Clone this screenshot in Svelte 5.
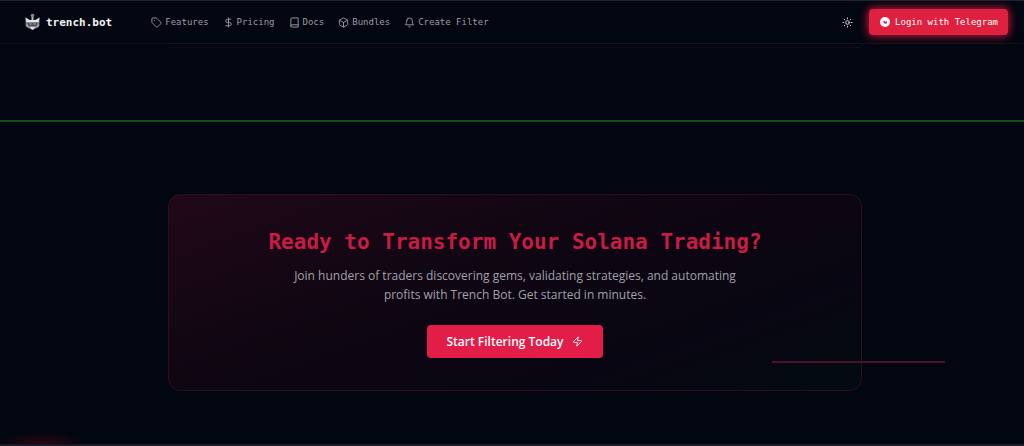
<script>
  const links = [
    { label: 'Features', icon: 'tag', href: '#features' },
    { label: 'Pricing', icon: 'dollar', href: '#pricing' },
    { label: 'Docs', icon: 'book', href: '#docs' },
    { label: 'Bundles', icon: 'box', href: '#bundles' },
    { label: 'Create Filter', icon: 'bell', href: '#create' }
  ];

  const icons = {
    tag: [
      'M12.6 2.6A2 2 0 0 0 11.2 2H4a2 2 0 0 0-2 2v7.2a2 2 0 0 0 .6 1.4l8.7 8.7a2.4 2.4 0 0 0 3.4 0l6.6-6.6a2.4 2.4 0 0 0 0-3.4z',
      'M7.5 7.5h.01'
    ],
    dollar: ['M12 2v20', 'M17 5H9.5a3.5 3.5 0 0 0 0 7h5a3.5 3.5 0 0 1 0 7H6'],
    book: ['M4 19.5v-15A2.5 2.5 0 0 1 6.5 2H20v20H6.5a2.5 2.5 0 0 1 0-5H20'],
    box: [
      'M21 8a2 2 0 0 0-1-1.7l-7-4a2 2 0 0 0-2 0l-7 4A2 2 0 0 0 3 8v8a2 2 0 0 0 1 1.7l7 4a2 2 0 0 0 2 0l7-4a2 2 0 0 0 1-1.7z',
      'M3.3 7L12 12l8.7-5',
      'M12 22V12'
    ],
    bell: ['M6 8a6 6 0 0 1 12 0c0 7 3 9 3 9H3s3-2 3-9', 'M10.3 21a1.94 1.94 0 0 0 3.4 0'],
    sun: [
      'M16 12a4 4 0 1 1-8 0 4 4 0 0 1 8 0z',
      'M12 2v2M12 20v2M4.9 4.9l1.4 1.4M17.7 17.7l1.4 1.4M2 12h2M20 12h2M6.3 17.7l-1.4 1.4M19.1 4.9l-1.4 1.4'
    ],
    zap: [
      'M4 14a1 1 0 0 1-.8-1.6l9.9-10.2a.5.5 0 0 1 .9.5L12 8.7A1 1 0 0 0 13 10h7a1 1 0 0 1 .8 1.6l-9.9 10.2a.5.5 0 0 1-.9-.5l2-6A1 1 0 0 0 11 14z'
    ]
  };
</script>

{#snippet icon(name)}
  <svg class="icon" viewBox="0 0 24 24" aria-hidden="true">
    {#each icons[name] as d}
      <path {d} />
    {/each}
  </svg>
{/snippet}

<div class="page">
  <header>
    <a class="brand" href="#top">
      <svg viewBox="0 0 16 18" aria-hidden="true">
        <circle cx="8" cy="2.5" r="1.8" fill="#85868f" />
        <path d="M8 4v3" stroke="#b8b8be" stroke-width="2" />
        <path d="M1 4l4 3h6l4-3v6l-1 4-4 2-2 1-2-1-4-2-1-4z" fill="#85868f" />
        <path d="M1 5l4 2h6l4-2-1 4H2z" fill="#e6e6ea" />
        <path d="M3 10h10l-1 3H4z" fill="#4a4b55" />
        <path d="M5 11h2M9 11h2M1 12l3 2M15 12l-3 2" stroke="#c4c4ca" />
        <path d="M5 14h6l-3 3z" fill="#dedee2" />
      </svg>
      <span>trench.bot</span>
    </a>
    <nav>
      {#each links as link}
        <a href={link.href}>{@render icon(link.icon)}{link.label}</a>
      {/each}
    </nav>
    <button class="theme" type="button" aria-label="Toggle theme">{@render icon('sun')}</button>
    <button class="login" type="button">
      <svg viewBox="0 0 12 12" aria-hidden="true">
        <circle cx="6" cy="6" r="5" fill="#fff" />
        <path d="M5 4a2 2 0 1 0 3 3V5L6 6z" fill="#e11d48" />
      </svg>
      Login with Telegram
    </button>
  </header>

  <main>
    <div class="previous"></div>
    <div class="scanline"></div>
    <section class="cta">
      <h2>Ready to Transform Your Solana Trading?</h2>
      <p>
        Join hunders of traders discovering gems, validating strategies, and automating profits with
        Trench Bot. Get started in minutes.
      </p>
      <button class="start" type="button">
        Start Filtering Today
        {@render icon('zap')}
      </button>
      <span class="streak"></span>
    </section>
  </main>

  <footer></footer>
</div>

<style>
  :global(body) {
    margin: 0;
    background: #020610;
  }
  .page {
    overflow: hidden;
    font-family: 'Open Sans', 'Noto Sans', sans-serif;
    color: #f4f4f5;
    background: #020610;
  }
  header {
    display: flex;
    align-items: center;
    box-sizing: border-box;
    height: 44px;
    padding: 0 16px 0 24px;
    border-top: 1px solid #22232d;
    border-bottom: 1px solid #12131d;
    font-family: 'DejaVu Sans Mono', 'Liberation Mono', monospace;
  }
  a {
    color: inherit;
    text-decoration: none;
  }
  button {
    font: inherit;
    border: 0;
    cursor: pointer;
  }
  .icon {
    width: 11px;
    height: 11px;
    fill: none;
    stroke: currentColor;
    stroke-width: 2;
    stroke-linecap: round;
    stroke-linejoin: round;
  }
  .brand {
    display: flex;
    align-items: center;
    gap: 5px;
    font-size: 11px;
    font-weight: 700;
  }
  .brand svg {
    width: 17px;
    height: 18px;
  }
  nav {
    display: flex;
    flex: 1;
    gap: 14px;
    margin-left: 39px;
    font-size: 9px;
    color: #9c9ca4;
  }
  nav a {
    display: flex;
    align-items: center;
    gap: 3px;
    white-space: nowrap;
  }
  .theme {
    display: flex;
    padding: 0;
    margin-right: 16px;
    background: none;
    color: #e4e4e7;
  }
  .login {
    display: flex;
    align-items: center;
    gap: 4px;
    height: 26px;
    padding: 0 10px;
    border-radius: 4px;
    background: #df213f;
    box-shadow: 0 0 8px 1px #c81a40;
    color: #fff;
    font-size: 9px;
    white-space: nowrap;
  }
  .login svg {
    width: 12px;
    height: 12px;
  }
  main {
    padding: 0 24px 53px 30px;
    background: radial-gradient(44px 12px at 42px 100%, #2a0714, transparent);
  }
  .previous {
    max-width: 692px;
    height: 3px;
    margin: 0 auto;
    border-bottom: 1px solid #190916;
  }
  .scanline {
    height: 2px;
    margin: 72px -24px 72px -30px;
    background: #134f1a;
  }
  .cta {
    position: relative;
    box-sizing: border-box;
    max-width: 694px;
    margin: 0 auto;
    padding: 33px 24px 32px;
    border: 1px solid #300b20;
    border-radius: 12px;
    background: linear-gradient(160deg, #210818 0%, #0e0612 45%, #080612 75%, #020b12 100%);
    text-align: center;
  }
  h2 {
    margin: 0;
    font-family: 'DejaVu Sans Mono', 'Liberation Mono', monospace;
    font-size: 21px;
    font-weight: 700;
    line-height: 28px;
    color: #c81c45;
  }
  p {
    max-width: 460px;
    margin: 10px auto 21px;
    font-size: 12px;
    line-height: 19px;
    color: #a1a1aa;
  }
  .start {
    display: inline-flex;
    align-items: center;
    gap: 9px;
    height: 33px;
    padding: 0 20px;
    border-radius: 4px;
    background: #e11d48;
    color: #fff;
    font-size: 12px;
    font-weight: 600;
  }
  .streak {
    position: absolute;
    right: -84px;
    bottom: 27px;
    width: 173px;
    height: 2px;
    background: #4f1225;
  }
  footer {
    height: 2px;
    background: #191a24;
  }
</style>
